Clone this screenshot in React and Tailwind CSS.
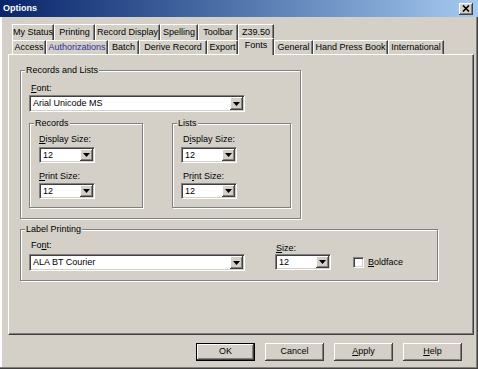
import React from "react";

// Tabs, back row then front row (front row holds the selected tab)
const backTabs = [
  { label: "My Status", w: "w-[42px]" },
  { label: "Printing", w: "w-[41px]" },
  { label: "Record Display", w: "w-[65px]" },
  { label: "Spelling", w: "w-[38px]" },
  { label: "Toolbar", w: "w-[40px]" },
  { label: "Z39.50", w: "w-[36px]" },
];

const frontTabs = [
  { label: "Access", w: "w-[34px]" },
  { label: "Authorizations", w: "w-[62px]", hot: true },
  { label: "Batch", w: "w-[31px]" },
  { label: "Derive Record", w: "w-[68px]" },
  { label: "Export", w: "w-[31px]" },
  { label: "Fonts", w: "w-[36px]", active: true },
  { label: "General", w: "w-[39px]" },
  { label: "Hand Press Book", w: "w-[75px]" },
  { label: "International", w: "w-[56px]" },
];

const raised =
  "bg-[#D4D0C8] shadow-[inset_-1px_-1px_0_#404040,inset_1px_1px_0_#fff,inset_-2px_-2px_0_#808080]";
const sunken =
  "border border-t-[#808080] border-l-[#808080] border-r-white border-b-white shadow-[inset_1px_1px_0_#404040,inset_-1px_-1px_0_#D4D0C8]";

const Tab = ({ label, w, hot, active }) => {
  if (active) {
    return (
      <div
        className={`${w} h-[17px] -mt-[2px] -mb-[1px] relative z-10 bg-[#D4D0C8] flex items-center justify-center border-t border-l border-r border-t-white border-l-white border-r-[#404040] shadow-[inset_-1px_0_0_#808080] pb-[2px]`}
      >
        {label}
      </div>
    );
  }
  return (
    <div
      className={`${w} h-full flex items-center justify-center border-t border-l border-r border-t-white border-l-white border-r-[#404040] shadow-[inset_-1px_0_0_#808080] ${
        hot ? "text-[#2e2e99]" : "text-black"
      }`}
    >
      {label}
    </div>
  );
};

const Group = ({ label, className, children }) => (
  <div
    className={`relative border border-[#808080] shadow-[inset_1px_1px_0_#fff,1px_1px_0_#fff] ${className}`}
  >
    <span className="absolute -top-[6px] left-[4px] bg-[#D4D0C8] px-[1px] leading-[11px]">
      {label}
    </span>
    {children}
  </div>
);

const Combo = ({ value, className }) => (
  <div className={`${className} flex bg-white p-[1px] ${sunken}`}>
    <span className="flex-1 pl-[2px] flex items-center leading-none">{value}</span>
    <span className={`w-[13px] h-full flex items-center justify-center ${raised}`}>
      <svg width="7" height="4" viewBox="0 0 7 4">
        <path d="M0 0h7L3.5 4z" fill="#000" />
      </svg>
    </span>
  </div>
);

const Label = ({ pre, u, post, className = "" }) => (
  <div className={`leading-[11px] ${className}`}>
    {pre}
    <span className="underline underline-offset-1">{u}</span>
    {post}
  </div>
);

const Button = ({ children, isDefault }) => (
  <button
    className={`w-[59px] h-[18px] flex items-center justify-center ${raised} ${
      isDefault ? "border border-black" : ""
    }`}
  >
    {children}
  </button>
);

export default function App() {
  return (
    <div className="w-[478px] h-[369px] bg-[#D4D0C8] flex flex-col overflow-hidden text-[9px] text-black font-['Liberation_Sans',Arial,sans-serif] shadow-[inset_-1px_-1px_0_#404040,inset_-2px_-2px_0_#808080,inset_2px_0_0_#fff]">
      {/* Title bar */}
      <div className="h-[17px] shrink-0 flex items-center justify-between pl-[3px] pr-[5px] bg-gradient-to-r from-[#0A246A] to-[#A6CAF0]">
        <span className="text-white font-bold leading-none">Options</span>
        <span className={`w-[14px] h-[12px] flex items-center justify-center ${raised}`}>
          <svg width="8" height="7" viewBox="0 0 8 7">
            <path d="M1 0.5L7 6.5M7 0.5L1 6.5" stroke="#000" strokeWidth="1.6" />
          </svg>
        </span>
      </div>

      {/* Tabs */}
      <div className="mt-[7px] pl-[12px] flex flex-col">
        <div className="h-[16px] flex">
          {backTabs.map((t) => (
            <Tab key={t.label} {...t} />
          ))}
        </div>
        <div className="h-[14px] flex items-start">
          {frontTabs.map((t) => (
            <Tab key={t.label} {...t} />
          ))}
        </div>
      </div>

      {/* Tab page */}
      <div className="ml-[8px] w-[466px] h-[281px] shrink-0 border border-t-white border-l-white border-r-[#404040] border-b-[#404040] shadow-[inset_-1px_-1px_0_#808080] pt-[15px] pl-[11px]">
        <Group label="Records and Lists" className="w-[281px] h-[149px] pl-[8px]">
          <Label u="F" post="ont:" className="ml-[2px] mt-[12px]" />
          <Combo value="Arial Unicode MS" className="mt-[1px] w-[216px] h-[17px]" />
          <div className="mt-[11px] flex">
            <Group label="Records" className="w-[114px] h-[85px] pl-[9px]">
              <Label u="D" post="isplay Size:" className="mt-[10px]" />
              <Combo value="12" className="mt-[2px] w-[56px] h-[16px]" />
              <Label u="P" post="rint Size:" className="mt-[8px]" />
              <Combo value="12" className="mt-[1px] w-[56px] h-[16px]" />
            </Group>
            <Group label="Lists" className="ml-[29px] w-[119px] h-[85px] pl-[8px]">
              <Label pre="D" u="i" post="splay Size:" className="ml-[2px] mt-[10px]" />
              <Combo value="12" className="mt-[2px] w-[56px] h-[16px]" />
              <Label pre="Pr" u="i" post="nt Size:" className="ml-[2px] mt-[8px]" />
              <Combo value="12" className="mt-[1px] w-[56px] h-[16px]" />
            </Group>
          </div>
        </Group>

        <Group label="Label Printing" className="mt-[10px] w-[418px] h-[52px] pl-[8px]">
          <div className="mt-[10px] flex items-start">
            <div className="flex flex-col">
              <Label pre="Fo" u="n" post="t:" className="ml-[2px] h-[14px]" />
              <Combo value="ALA BT Courier" className="w-[216px] h-[17px]" />
            </div>
            <div className="ml-[30px] flex flex-col">
              <Label u="S" post="ize:" className="ml-[1px] h-[14px] pt-[3px]" />
              <Combo value="12" className="w-[56px] h-[16px]" />
            </div>
            <div className="ml-[22px] mt-[17px] flex items-center">
              <span className={`w-[11px] h-[11px] bg-white ${sunken}`} />
              <Label u="B" post="oldface" className="ml-[4px]" />
            </div>
          </div>
        </Group>
      </div>

      {/* Buttons */}
      <div className="mt-[8px] pr-[16px] flex justify-end gap-[10px]">
        <Button isDefault>OK</Button>
        <Button>Cancel</Button>
        <Button>
          <span className="underline underline-offset-1">A</span>pply
        </Button>
        <Button>
          <span className="underline underline-offset-1">H</span>elp
        </Button>
      </div>
    </div>
  );
}
